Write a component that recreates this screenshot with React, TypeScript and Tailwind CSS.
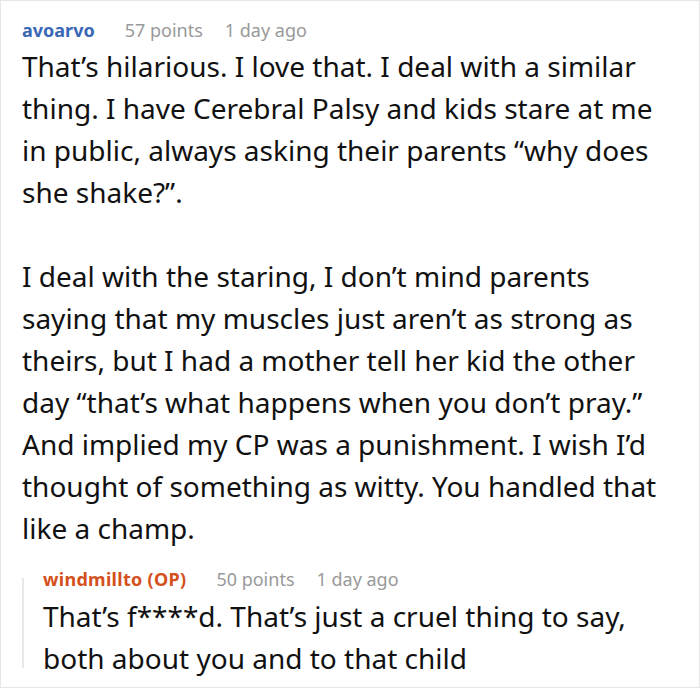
import React from "react"

const font = { fontFamily: '"Noto Sans", "Open Sans", sans-serif' }

interface MetaProps {
  name: string
  nameClass: string
  points: number
  age: string
}

function Meta({ name, nameClass, points, age }: MetaProps) {
  return (
    <div className="flex items-baseline text-[18px] leading-[26px]">
      <span className={`font-bold ${nameClass}`}>{name}</span>
      <span className="ml-[30px] text-[#999999]">{points} points</span>
      <span className="ml-[22px] text-[#999999]">{age}</span>
    </div>
  )
}

export default function App() {
  return (
    <div style={font} className="box-border h-[688px] w-[700px] overflow-hidden border border-[#e6e6e6] bg-white pl-[21px] pr-[29px] pt-[16px]">
      <Meta name="avoarvo" nameClass="text-[#3a68b6]" points={57} age="1 day ago" />
      <div className="mt-[2px] text-[28px] leading-[42px] text-[#111111]">
        <p>
          That’s hilarious. I love that. I deal with a similar thing. I have Cerebral Palsy and kids stare at me in
          public, always asking their parents “why does she shake?”.
        </p>
        <p className="mt-[42px]">
          I deal with the staring, I don’t mind parents saying that my muscles just aren’t as strong as theirs, but I
          had a mother tell her kid the other day “that’s what happens when you don’t pray.” And implied my CP was a
          punishment. I wish I’d thought of something as witty. You handled that like a champ.
        </p>
      </div>
      <div className="relative mt-[17px] pl-[21px]">
        <span className="absolute bottom-[11px] left-0 top-[12px] w-[2px] bg-[#e8e8e8]" />
        <Meta name="windmillto (OP)" nameClass="tracking-[0.3px] text-[#d4501c]" points={50} age="1 day ago" />
        <p className="mt-[3px] text-[28px] leading-[42px] text-[#111111]">
          That’s f****d. That’s just a cruel thing to say, both about you and to that child
        </p>
      </div>
    </div>
  )
}
